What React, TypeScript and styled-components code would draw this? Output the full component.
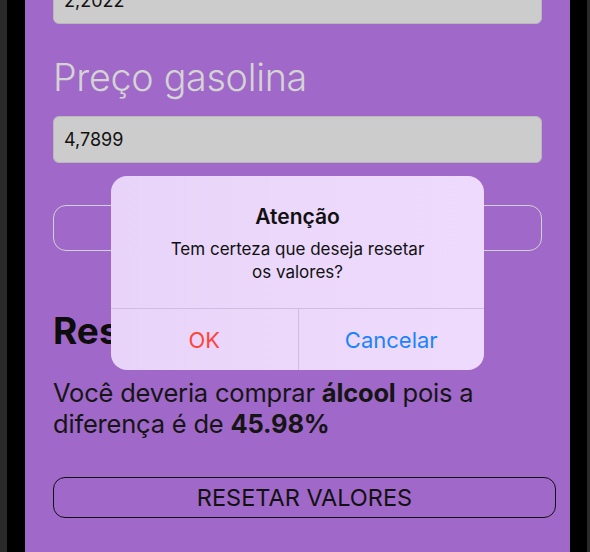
import React from "react";
import styled, { createGlobalStyle } from "styled-components";

const Global = createGlobalStyle`
  html, body { margin: 0; padding: 0; background: #000; overflow: hidden; }
  body { width: 590px; height: 552px; font-family: Inter, "Noto Sans", sans-serif; }
`;

const Device = styled.div`
  position: relative;
  display: flex;
  width: 590px;
  height: 552px;
  box-sizing: border-box;
  background: #000;
  border-left: 7px solid #2a2a2a;
  border-right: 3px solid #2a2a2a;
  padding: 0 17px 0 18px;
  overflow: hidden;
`;

const Screen = styled.div`
  flex: 1;
  background: #a068c8;
  overflow: hidden;
`;

const Content = styled.div`
  display: flex;
  flex-direction: column;
  padding: 0 28px;
  margin-top: -23px;
`;

const Field = styled.div`
  height: 47px;
  box-sizing: border-box;
  background: #cccccc;
  border: 1px solid #b9b9b9;
  border-radius: 6px;
  display: flex;
  align-items: center;
  padding: 0 10px;
  font-size: 18px;
  color: #111;
`;

const Label = styled.div`
  margin-top: 30px;
  margin-bottom: 16px;
  font-size: 37.7px;
  font-weight: 300;
  color: #d4d4d4;
  line-height: 46px;
  letter-spacing: -0.3px;
`;

const GhostButton = styled.div`
  margin-top: 42px;
  height: 46px;
  box-sizing: border-box;
  border: 1.5px solid #d2d2d2;
  border-radius: 13px;
`;

const Heading = styled.div`
  margin-top: 58px;
  font-size: 37px;
  font-weight: 700;
  line-height: 44px;
  color: #0d0d0d;
`;

const Paragraph = styled.p`
  margin: 24px 0 0;
  font-size: 25.5px;
  line-height: 31px;
  font-weight: 400;
  color: #151515;
  letter-spacing: -0.2px;
  b { font-weight: 700; }
`;

const ResetButton = styled.div`
  margin-top: 38px;
  margin-right: -14px;
  height: 41px;
  box-sizing: border-box;
  border: 1.5px solid #111;
  border-radius: 12px;
  display: flex;
  align-items: center;
  justify-content: center;
  font-size: 23.5px;
  font-weight: 400;
  color: #111;
`;

const Alert = styled.div`
  position: absolute;
  left: 104px;
  top: 176px;
  width: 373px;
  height: 194px;
  border-radius: 16px;
  background: linear-gradient(90deg, #e8d4f8 0%, #ecd8fb 50%, #eedafd 100%);
  display: flex;
  flex-direction: column;
  overflow: hidden;
`;

const AlertBody = styled.div`
  flex: 1;
  display: flex;
  flex-direction: column;
  align-items: center;
  padding-top: 27px;
  text-align: center;
  color: #111;
`;

const AlertTitle = styled.div`
  font-size: 21px;
  font-weight: 600;
  line-height: 28px;
`;

const AlertMessage = styled.div`
  margin-top: 7px;
  font-size: 17px;
  line-height: 23px;
  width: 280px;
`;

const Actions = styled.div`
  height: 61px;
  display: grid;
  grid-template-columns: 1fr 1fr;
  border-top: 1px solid #d2bce4;
`;

const Action = styled.div<{ $color: string; $divider?: boolean }>`
  display: flex;
  align-items: center;
  justify-content: center;
  font-size: 22px;
  color: ${(p) => p.$color};
  border-left: ${(p) => (p.$divider ? "1px solid #d2bce4" : "none")};
`;

export default function App() {
  return (
    <>
      <Global />
      <Device>
        <Screen>
          <Content>
            <Field>2,2022</Field>
            <Label>Preço gasolina</Label>
            <Field>4,7899</Field>
            <GhostButton />
            <Heading>Resultado</Heading>
            <Paragraph>
              Você deveria comprar <b>álcool</b> pois a diferença é de <b>45.98%</b>
            </Paragraph>
            <ResetButton>RESETAR VALORES</ResetButton>
          </Content>
        </Screen>
        <Alert>
          <AlertBody>
            <AlertTitle>Atenção</AlertTitle>
            <AlertMessage>Tem certeza que deseja resetar<br />os valores?</AlertMessage>
          </AlertBody>
          <Actions>
            <Action $color="#ff453a">OK</Action>
            <Action $color="#1a84ff" $divider>Cancelar</Action>
          </Actions>
        </Alert>
      </Device>
    </>
  );
}
